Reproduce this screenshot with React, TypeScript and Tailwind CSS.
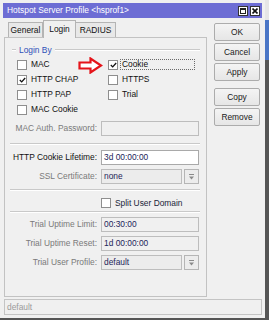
import React from "react";

const FONT = { fontFamily: '"Liberation Sans", Arial, sans-serif' };

function Check({ checked }: { checked?: boolean }) {
  return (
    <span className="w-[10px] h-[10px] border border-[#8e8e8e] bg-white flex items-center justify-center shrink-0">
      {checked && (
        <svg width="7" height="6" viewBox="0 0 7 6">
          <path d="M0.8 3 L2.7 4.9 L6.2 1" stroke="#111" strokeWidth="1.3" fill="none" />
        </svg>
      )}
    </span>
  );
}

function CheckRow({ label, checked, focus }: { label: string; checked?: boolean; focus?: boolean }) {
  return (
    <div className="h-[15px] flex items-center">
      <Check checked={checked} />
      {focus ? (
        <span className="ml-[2px] w-[75px] h-[11px] border border-dotted border-[#6a6a6a] flex items-center pl-[1px] text-[#111] leading-none">
          {label}
        </span>
      ) : (
        <span className="ml-[4px] text-[#111] leading-none">{label}</span>
      )}
    </div>
  );
}

function Sep({ className = "" }: { className?: string }) {
  return <div className={"ml-[5px] h-[2px] border-t border-[#c9c9c9] border-b border-b-white " + className} />;
}

function DropBtn() {
  return (
    <span className="w-[15px] h-[15px] border border-[#b5b5b5] bg-[#ececec] flex items-center justify-center shrink-0">
      <svg width="9" height="9" viewBox="0 0 9 9">
        <path d="M2 2.5 H7" stroke="#8a8a8a" strokeWidth="1" />
        <path d="M2 4.5 H7 L4.5 7.5 Z" fill="#8a8a8a" />
      </svg>
    </span>
  );
}

function Row({
  label,
  dim,
  children,
  className = "",
}: {
  label: string;
  dim?: boolean;
  children: React.ReactNode;
  className?: string;
}) {
  return (
    <div className={"h-[15px] flex items-center " + className}>
      <span className={"w-[92px] text-right leading-none " + (dim ? "text-[#7a7a7a]" : "text-[#111]")}>{label}</span>
      <div className="ml-[4px] w-[98px] h-[15px] flex">{children}</div>
    </div>
  );
}

function Field({ value, white }: { value?: string; white?: boolean }) {
  return (
    <span
      className={
        "flex-1 h-[15px] border flex items-center pl-[2px] leading-none text-[#1c2559] " +
        (white ? "bg-white border-[#a9a9a9]" : "bg-[#f0f0f0] border-[#bdbdbd]")
      }
    >
      {value}
    </span>
  );
}

function Select({ value }: { value: string }) {
  return (
    <>
      <span className="flex-1 h-[15px] border border-[#bdbdbd] bg-[#ececec] flex items-center pl-[2px] leading-none text-[#1c2559]">
        {value}
      </span>
      <span className="w-[2px]" />
      <DropBtn />
    </>
  );
}

function Btn({ label, className = "" }: { label: string; className?: string }) {
  return (
    <div
      className={
        "w-[46px] h-[18px] border border-[#acacac] rounded-[2px] bg-gradient-to-b from-[#f4f4f4] to-[#e6e6e6] flex items-center justify-center text-[#1a1a1a] leading-none " +
        className
      }
    >
      {label}
    </div>
  );
}

export default function App() {
  return (
    <div className="w-[269px] h-[320px] bg-[#555555] overflow-hidden flex text-[8.4px]" style={FONT}>
      <div className="w-[265px] h-[318px] bg-[#f0f0f0] pt-[3px] px-[3px] flex flex-col shrink-0">
        {/* title bar */}
        <div className="h-[15px] bg-[#6d6dd4] flex items-center justify-between pl-[4px] pr-[2px]">
          <span className="text-white leading-none">Hotspot Server Profile &lt;hsprof1&gt;</span>
          <div className="flex gap-[2px] items-center">
            <span className="w-[10px] h-[10px] bg-white border border-[#333] flex items-center justify-center">
              <span className="w-[6px] h-[6px] border border-[#222] border-t-2" />
            </span>
            <span className="w-[10px] h-[10px] bg-white border border-[#333] flex items-center justify-center">
              <svg width="6" height="6" viewBox="0 0 6 6">
                <path d="M0.5 0.5 L5.5 5.5 M5.5 0.5 L0.5 5.5" stroke="#111" strokeWidth="1.6" />
              </svg>
            </span>
          </div>
        </div>

        <div className="flex mt-[2px]">
          {/* left column */}
          <div className="ml-[1px] w-[203px] flex flex-col">
            {/* tabs */}
            <div className="h-[17px] flex items-end pl-[4px]">
              <div className="w-[35px] h-[15px] border border-b-0 border-[#b4b4b4] bg-[#e8e8e8] flex items-center justify-center leading-none text-[#111]">
                General
              </div>
              <div className="relative z-10 w-[33px] h-[18px] -mb-[1px] border border-b-0 border-[#b4b4b4] bg-[#f0f0f0] flex items-start pt-[4px] justify-center leading-none text-[#111]">
                Login
              </div>
              <div className="w-[40px] h-[15px] border border-b-0 border-l-0 border-[#b4b4b4] bg-[#e8e8e8] flex items-center justify-center leading-none text-[#111]">
                RADIUS
              </div>
            </div>

            {/* panel */}
            <div className="relative h-[260px] border border-[#c2c2c2] bg-[#f0f0f0] flex flex-col pr-[6px]">
              {/* legend */}
              <div className="mt-[7px] h-[10px] flex items-center pl-[7px]">
                <span className="w-[4px] h-[2px] border-t border-[#c9c9c9] border-b border-b-white" />
                <span className="mx-[3px] text-[#2f4fb8] leading-none">Login By</span>
                <span className="flex-1 h-[2px] border-t border-[#c9c9c9] border-b border-b-white" />
              </div>

              {/* checkboxes */}
              <div className="mt-[2px] pl-[12px] flex">
                <div className="w-[91px] flex flex-col">
                  <CheckRow label="MAC" />
                  <CheckRow label="HTTP CHAP" checked />
                  <CheckRow label="HTTP PAP" />
                  <CheckRow label="MAC Cookie" />
                </div>
                <div className="flex flex-col">
                  <CheckRow label="Cookie" checked focus />
                  <CheckRow label="HTTPS" />
                  <CheckRow label="Trial" />
                </div>
              </div>

              {/* red arrow annotation */}
              <svg className="absolute left-[73px] top-[19px]" width="25" height="17" viewBox="0 0 25 17">
                <path
                  d="M1.5 5.5 H12.5 V1.5 L23 8.5 L12.5 15.5 V11.5 H1.5 Z"
                  fill="#fff"
                  stroke="#e5141a"
                  strokeWidth="2.2"
                  strokeLinejoin="miter"
                />
              </svg>

              <Row label="MAC Auth. Password:" dim className="mt-[4px]">
                <Field />
              </Row>

              <Sep className="mt-[7px]" />

              <Row label="HTTP Cookie Lifetime:" className="mt-[5px]">
                <Field value="3d 00:00:00" white />
              </Row>
              <Row label="SSL Certificate:" dim className="mt-[4px]">
                <Select value="none" />
              </Row>

              <Sep className="mt-[5px]" />

              <div className="mt-[5px] h-[14px] flex items-center pl-[96px]">
                <Check />
                <span className="ml-[4px] text-[#1a1f3a] leading-none">Split User Domain</span>
              </div>

              <Sep className="mt-[1px]" />

              <Row label="Trial Uptime Limit:" dim className="mt-[4px]">
                <Field value="00:30:00" />
              </Row>
              <Row label="Trial Uptime Reset:" dim className="mt-[4px]">
                <Field value="1d 00:00:00" />
              </Row>
              <Row label="Trial User Profile:" dim className="mt-[4px]">
                <Select value="default" />
              </Row>
            </div>
          </div>

          {/* right buttons */}
          <div className="ml-[7px] pt-[3px] flex flex-col gap-[2px]">
            <Btn label="OK" />
            <Btn label="Cancel" />
            <Btn label="Apply" />
            <Btn label="Copy" className="mt-[5px]" />
            <Btn label="Remove" />
          </div>
        </div>

        {/* status bar */}
        <div className="mt-[2px] ml-[1px] w-[258px] h-[16px] border border-[#c4c4c4] flex items-center pl-[2px] text-[#9a9a9a] leading-none">
          default
        </div>
      </div>
      <div className="flex-1 flex flex-col">
        <div className="h-[20px] bg-[#e6e6e6]" />
        <div className="h-[40px] bg-[#4a76c6]" />
        <div className="flex-1" />
      </div>
    </div>
  );
}
